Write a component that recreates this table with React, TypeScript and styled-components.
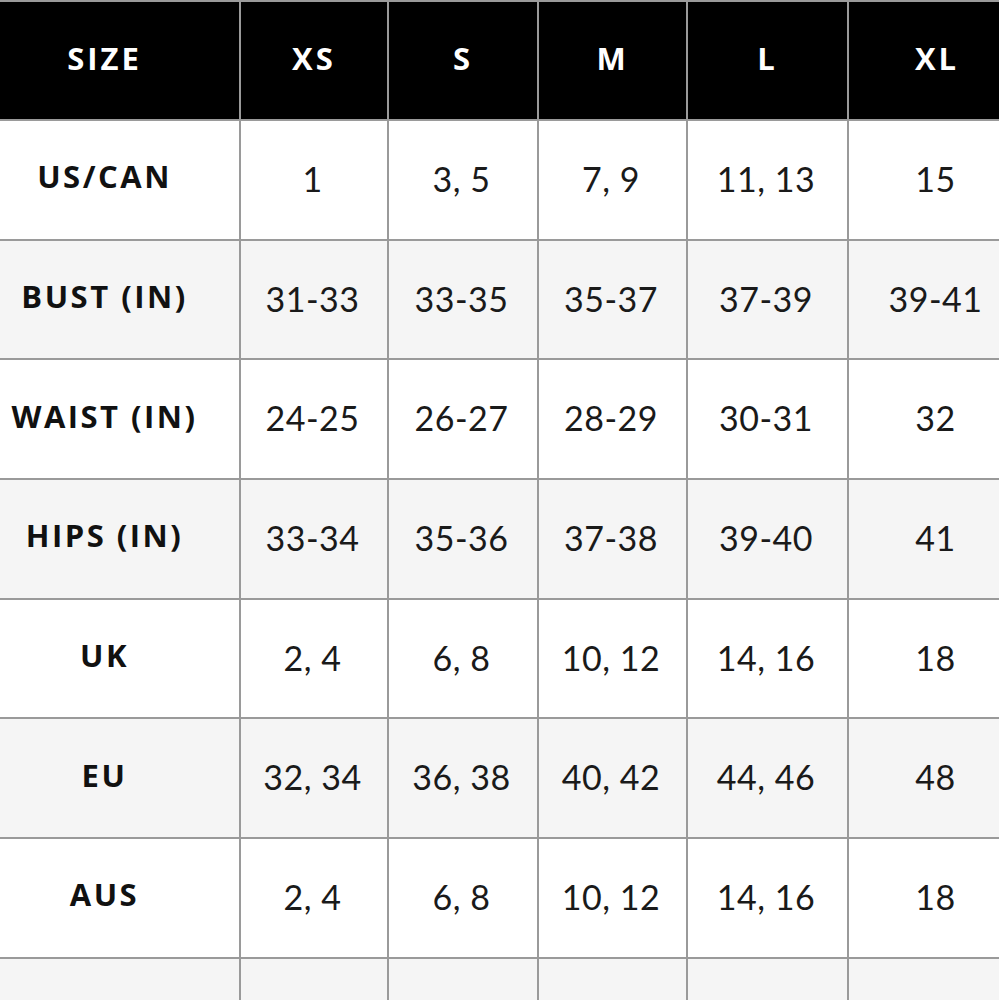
import React from "react";
import styled, { createGlobalStyle } from "styled-components";

const Global = createGlobalStyle`
  html, body { margin: 0; padding: 0; background: #ffffff; overflow: hidden; }
`;

const Table = styled.table`
  border-collapse: collapse;
  table-layout: fixed;
  width: 1026px;
  border-top: 2px solid #9a9a9a;
`;

const HeadRow = styled.tr`
  background: #000000;
  height: 119px;
`;

const Row = styled.tr<{ $shade: boolean }>`
  background: ${(p) => (p.$shade ? "#f5f5f5" : "#ffffff")};
  height: 119.7px;
`;

const HeadCell = styled.th<{ $first?: boolean }>`
  border: 2px solid #9a9a9a;
  border-top: none;
  ${(p) => (p.$first ? "border-left: none; padding: 0 30px 6px 0;" : "padding: 0 0 6px 0;")}
  color: #ffffff;
  font-family: "Open Sans", "Liberation Sans", sans-serif;
  font-weight: 700;
  font-size: 31px;
  letter-spacing: 3px;
  text-align: center;
  vertical-align: middle;
`;

const LabelCell = styled.td`
  border: 2px solid #9a9a9a;
  border-left: none;
  padding: 0 30px 7px 0;
  color: #111111;
  font-family: "Open Sans", "Liberation Sans", sans-serif;
  font-weight: 700;
  font-size: 31px;
  letter-spacing: 2.5px;
  text-align: center;
  vertical-align: middle;
  white-space: nowrap;
`;

const ValueCell = styled.td`
  border: 2px solid #9a9a9a;
  padding: 0 3px 3px 0;
  color: #1a1a1a;
  font-family: Lato, "Noto Sans", sans-serif;
  font-weight: 400;
  font-size: 34px;
  letter-spacing: 0.5px;
  text-align: center;
  vertical-align: middle;
  white-space: nowrap;
`;

const widths = [240, 148, 150, 149, 161, 178];
const sizes = ["SIZE", "XS", "S", "M", "L", "XL"];
const rows: [string, string[]][] = [
  ["US/CAN", ["1", "3, 5", "7, 9", "11, 13", "15"]],
  ["BUST (IN)", ["31-33", "33-35", "35-37", "37-39", "39-41"]],
  ["WAIST (IN)", ["24-25", "26-27", "28-29", "30-31", "32"]],
  ["HIPS (IN)", ["33-34", "35-36", "37-38", "39-40", "41"]],
  ["UK", ["2, 4", "6, 8", "10, 12", "14, 16", "18"]],
  ["EU", ["32, 34", "36, 38", "40, 42", "44, 46", "48"]],
  ["AUS", ["2, 4", "6, 8", "10, 12", "14, 16", "18"]],
  ["", ["", "", "", "", ""]],
];

export default function App() {
  return (
    <>
      <Global />
      <Table>
        <colgroup>
          {widths.map((w, i) => (
            <col key={i} style={{ width: w }} />
          ))}
        </colgroup>
        <thead>
          <HeadRow>
            {sizes.map((s, i) => (
              <HeadCell key={s} $first={i === 0}>
                {s}
              </HeadCell>
            ))}
          </HeadRow>
        </thead>
        <tbody>
          {rows.map(([label, vals], i) => (
            <Row key={i} $shade={i % 2 === 1}>
              <LabelCell>{label}</LabelCell>
              {vals.map((v, j) => (
                <ValueCell key={j}>{v}</ValueCell>
              ))}
            </Row>
          ))}
        </tbody>
      </Table>
    </>
  );
}
